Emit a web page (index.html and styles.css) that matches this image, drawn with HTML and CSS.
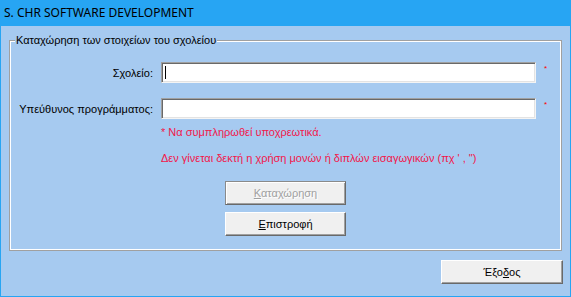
FILE: index.html
```html
<!DOCTYPE html>
<html lang="el">
<head>
<meta charset="utf-8">
<title>S. CHR SOFTWARE DEVELOPMENT</title>
<link rel="stylesheet" href="styles.css">
</head>
<body>
<div class="window">
  <div class="titlebar">S. CHR SOFTWARE DEVELOPMENT</div>
  <div class="client">
    <div class="group">
      <span class="legend">Καταχώρηση των στοιχείων του σχολείου</span>
      <div class="form">
        <label class="label">Σχολείο:</label>
        <div class="field"><span class="caret"></span></div>
        <span class="req">*</span>
        <label class="label">Υπεύθυνος προγράμματος:</label>
        <div class="field"></div>
        <span class="req">*</span>
      </div>
      <p class="note note-first">* Να συμπληρωθεί υποχρεωτικά.</p>
      <p class="note note-second">Δεν γίνεται δεκτή η χρήση μονών ή διπλών εισαγωγικών (πχ ' , ")</p>
      <div class="actions">
        <button class="btn btn-disabled" disabled><u>Κ</u>αταχώρηση</button>
        <button class="btn"><u>Ε</u>πιστροφή</button>
      </div>
    </div>
    <div class="footer">
      <button class="btn btn-exit">Έξο<u>δ</u>ος</button>
    </div>
  </div>
</div>
</body>
</html>
```

FILE: styles.css
```css
* { box-sizing: border-box; }

html, body {
  margin: 0;
  padding: 0;
  background: #a6caf0;
}

.window {
  width: 571px;
  height: 297px;
  border: 1px solid #27a5f3;
  background: #a6caf0;
  font-family: "Liberation Sans", Arial, sans-serif;
  font-size: 11px;
  color: #000;
}

.titlebar {
  height: 25px;
  background: #27a5f3;
  padding-left: 3px;
  font-family: "Noto Sans", "Open Sans", sans-serif;
  font-size: 12px;
  line-height: 24px;
  color: #000;
  white-space: nowrap;
}

.client {
  padding: 14px 8px 0 8px;
}

.group {
  position: relative;
  height: 211px;
  border: 1px solid #a0a0a0;
  box-shadow: inset 0 0 0 1px #ffffff;
  padding-top: 21px;
}

.legend {
  position: absolute;
  top: -8px;
  left: 5px;
  padding: 0 1px;
  background: #a6caf0;
  line-height: 14px;
  white-space: nowrap;
}

.form {
  display: grid;
  grid-template-columns: 143px 375px auto;
  column-gap: 8px;
  row-gap: 15px;
  align-items: center;
}

.label {
  text-align: right;
  white-space: nowrap;
}

.field {
  position: relative;
  height: 21px;
  background: #ffffff;
  border-top: 1px solid #a0a0a0;
  border-left: 1px solid #a0a0a0;
  border-right: 1px solid #f4f4f4;
  border-bottom: 1px solid #f4f4f4;
  box-shadow: inset 1px 1px 0 #696969, inset -1px -1px 0 #e3e3e3;
}

.caret {
  position: absolute;
  left: 3px;
  top: 3px;
  width: 1px;
  height: 13px;
  background: #000;
}

.req {
  align-self: start;
  color: #ff0000;
  font-size: 8px;
  line-height: 8px;
  margin-top: 3px;
}

.note {
  margin: 0 0 0 151px;
  color: #f2164a;
  line-height: 14px;
  white-space: nowrap;
}

.note-first { margin-top: 6px; }
.note-second { margin-top: 12px; }

.actions {
  display: flex;
  flex-direction: column;
  align-items: center;
  gap: 7px;
  margin-top: 16px;
}

.btn {
  width: 121px;
  height: 24px;
  padding: 0;
  margin: 0;
  background: #f0f0f0;
  font-family: "Liberation Sans", Arial, sans-serif;
  font-size: 11px;
  color: #000;
  border-top: 1px solid #ffffff;
  border-left: 1px solid #ffffff;
  border-right: 1px solid #696969;
  border-bottom: 1px solid #696969;
  box-shadow: inset -1px -1px 0 #a0a0a0;
  border-radius: 0;
}

.btn u {
  text-underline-offset: 1px;
}

.btn-disabled {
  color: #a0a0a0;
  text-shadow: 1px 1px 0 #ffffff;
  border-top-color: #8a8a8a;
  border-left-color: #8a8a8a;
  box-shadow: inset 1px 1px 0 #ffffff, inset -1px -1px 0 #a0a0a0;
}

.footer {
  display: flex;
  justify-content: flex-end;
  padding-top: 9px;
  margin-right: -1px;
}

.btn-exit {
  width: 122px;
}
```
